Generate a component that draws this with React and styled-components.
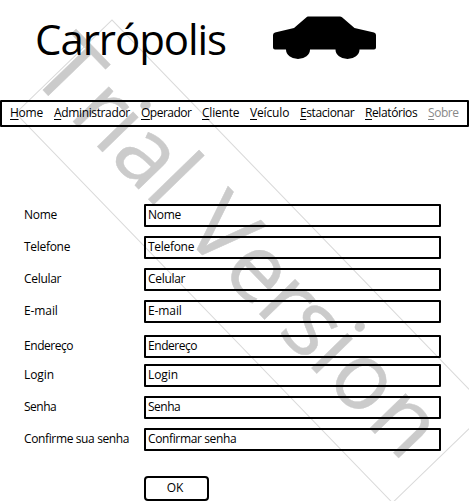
import React from "react";
import styled, { createGlobalStyle } from "styled-components";

const GlobalStyle = createGlobalStyle`
  * { box-sizing: border-box; }
  body {
    margin: 0;
    background: #fff;
    color: #000;
    font-family: "Open Sans", "Noto Sans", sans-serif;
    font-size: 12px;
    overflow: hidden;
  }
`;

const Page = styled.div`
  position: relative;
  width: 469px;
  height: 501px;
  overflow: hidden;
  isolation: isolate;
`;

const WatermarkLayer = styled.svg`
  position: absolute;
  inset: 0;
  z-index: -1;
  pointer-events: none;
`;

const WatermarkText = styled.text`
  font-family: "Open Sans", sans-serif;
  font-size: 93px;
  fill: #cbcbcb;
  stroke: #cbcbcb;
  stroke-width: 0.4px;
`;

const Header = styled.header`
  display: flex;
  height: 100px;
  padding-left: 35px;
`;

const Title = styled.h1`
  width: 237px;
  margin: 9px 0 0;
  font-size: 42px;
  font-weight: 400;
  line-height: 60px;
  letter-spacing: -1.05px;
  white-space: nowrap;
`;

const CarIcon = styled.svg`
  margin-top: 16px;
`;

const MenuBar = styled.nav`
  display: flex;
  gap: 11px;
  height: 27px;
  padding-left: 8px;
  border: 2px solid #000;
  border-radius: 1px;
`;

const MenuItem = styled.a`
  display: block;
  flex: none;
  width: ${(p) => p.$width}px;
  line-height: 22px;
  letter-spacing: ${(p) => p.$spacing}px;
  white-space: nowrap;
  color: ${(p) => (p.$disabled ? "#888" : "#000")};

  &::first-letter {
    text-decoration: underline;
    text-decoration-thickness: 1px;
    text-underline-offset: 2px;
  }
`;

const Form = styled.form`
  padding: 77px 0 0 24px;
`;

const Row = styled.div`
  display: flex;
  height: 23px;
  margin-bottom: ${(p) => p.$gap}px;
  letter-spacing: ${(p) => p.$spacing}px;
  white-space: nowrap;
`;

const Label = styled.label`
  width: 120px;
  line-height: 21px;
`;

const Field = styled.div`
  width: 297px;
  padding-left: 2px;
  border: 2px solid #000;
  border-radius: 1px;
  line-height: 17px;
`;

const OkButton = styled.button`
  display: block;
  width: 65px;
  height: 25px;
  margin: 0 0 0 120px;
  padding: 0 3px 2px 0;
  border: 2px solid #000;
  border-radius: 4px;
  background: transparent;
  color: #000;
  font: inherit;
  line-height: 19px;
`;

const menu = [
  { text: "Home", width: 33, spacing: -0.25 },
  { text: "Administrador", width: 76, spacing: -0.36 },
  { text: "Operador", width: 50, spacing: -0.5 },
  { text: "Cliente", width: 37, spacing: -0.2 },
  { text: "Veículo", width: 39, spacing: -0.15 },
  { text: "Estacionar", width: 54, spacing: -0.4 },
  { text: "Relatórios", width: 52, spacing: -0.4 },
  { text: "Sobre", width: 30, spacing: -0.45, disabled: true },
];

const fields = [
  { label: "Nome", value: "Nome", gap: 9, spacing: -0.25 },
  { label: "Telefone", value: "Telefone", gap: 9, spacing: -0.3 },
  { label: "Celular", value: "Celular", gap: 9, spacing: -0.3 },
  { label: "E-mail", value: "E-mail", gap: 12, spacing: -0.1 },
  { label: "Endereço", value: "Endereço", gap: 6, spacing: -0.45 },
  { label: "Login", value: "Login", gap: 9, spacing: -0.1 },
  { label: "Senha", value: "Senha", gap: 9, spacing: -0.5 },
  { label: "Confirme sua senha", value: "Confirmar senha", gap: 25, spacing: -0.37 },
];

function Watermark() {
  return (
    <WatermarkLayer width="469" height="501" viewBox="0 0 469 501" aria-hidden="true">
      <g transform="translate(112 20) rotate(45.96)">
        <WatermarkText
          x="-19.5 38 72.6 96 146 170 200 256 305.6 338 381 406.5 464.7"
          y="98.5"
        >
          {"Trial Version"}
        </WatermarkText>
        <rect width="542" height="134" fill="none" stroke="#dadada" />
      </g>
    </WatermarkLayer>
  );
}

export default function App() {
  return (
    <Page>
      <GlobalStyle />
      <Watermark />
      <Header>
        <Title>Carrópolis</Title>
        <CarIcon width="105" height="44" viewBox="0 0 105 44">
          <path d="M3 16.5 22 12 34.5 1.2Q35 .5 36 .5H68Q69 .5 70 1.2L82.5 12 102 16.5Q104 17 104 19V31.5Q104 33.5 102 33.5H87.5A12 9.5 0 0 1 63.5 33.5H38A12 9.5 0 0 1 14 33.5H3Q1 33.5 1 31.5V19Q1 17 3 16.5Z" />
        </CarIcon>
      </Header>
      <MenuBar>
        {menu.map((m) => (
          <MenuItem key={m.text} $width={m.width} $spacing={m.spacing} $disabled={m.disabled}>
            {m.text}
          </MenuItem>
        ))}
      </MenuBar>
      <Form>
        {fields.map((f) => (
          <Row key={f.label} $gap={f.gap} $spacing={f.spacing}>
            <Label>{f.label}</Label>
            <Field>{f.value}</Field>
          </Row>
        ))}
        <OkButton type="button">OK</OkButton>
      </Form>
    </Page>
  );
}
